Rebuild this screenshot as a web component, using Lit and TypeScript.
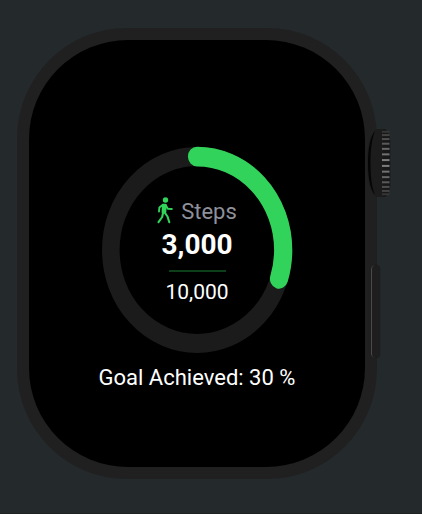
import { LitElement, html, svg, css } from "lit";
import { customElement, property } from "lit/decorators.js";

@customElement("progress-ring")
class ProgressRing extends LitElement {
  @property({ type: Number }) value = 0;

  static styles = css`
    :host {
      display: grid;
      width: 190px;
      height: 206px;
    }
    .ring,
    .content {
      grid-area: 1 / 1;
    }
    .ring {
      width: 100%;
      height: 100%;
      overflow: visible;
    }
    .track,
    .bar {
      fill: none;
      stroke-width: 17.6;
    }
    .track {
      stroke: #1b1b1b;
    }
    .bar {
      stroke: #32d35a;
      stroke-width: 18.2;
      stroke-linecap: round;
    }
    .content {
      display: flex;
      flex-direction: column;
      align-items: center;
      justify-content: center;
      padding-top: 2px;
    }
  `;

  render() {
    return html`
      <svg class="ring" viewBox="0 0 190 190" preserveAspectRatio="none" aria-hidden="true">
        <circle class="track" cx="95" cy="95" r="86.2" />
        <circle
          class="bar"
          cx="95"
          cy="95"
          r="86.2"
          pathLength="100"
          stroke-dasharray="${this.value} 100"
          transform="rotate(-90 95 95)"
        />
      </svg>
      <div class="content"><slot></slot></div>
    `;
  }
}

@customElement("watch-crown")
class WatchCrown extends LitElement {
  static styles = css`
    :host,
    svg {
      display: block;
    }
  `;

  render() {
    const ridges = Array.from({ length: 14 }, (_, i) => {
      const level = Math.round(132 - Math.abs(i - 6.5) * 12);
      const y = 35 + Math.sin(((i - 6.5) / 6.5) * 1.05) * 36;
      return svg`<rect x="15" y=${y - 1} width="7.5" height="2" fill="rgb(${level},${level},${level})" />`;
    });
    return html`
      <svg width="24" height="70" viewBox="0 0 24 70" aria-hidden="true">
        <path d="M9 1C3 6 0 19 0 35s3 29 9 34h9c4-3 5.500-8 5.500-14V15c0-6-1.500-11-5.500-14Z" fill="#1c1c1c" />
        <path d="M8 3C3 9 1 21 1 35s2 26 7 32C5 60 3.500 49 3.500 35S5 10 8 3Z" fill="#050505" />
        <path d="M16 1h2c3 3 5 8 5 14v40c0 6-2 11-5 14h-2Z" fill="#181818" />
        ${ridges}
      </svg>
    `;
  }
}

@customElement("app-root")
class AppRoot extends LitElement {
  @property({ type: Number }) steps = 3000;
  @property({ type: Number }) goal = 10000;

  static styles = css`
    :host {
      display: block;
      box-sizing: border-box;
      min-height: 100vh;
      padding: 28px 45px 32px 17px;
      background: #24292c;
      border-bottom: 1px solid #202122;
      font-family: Roboto, "Liberation Sans", sans-serif;
      color: #fff;
    }
    .case {
      position: relative;
      box-sizing: border-box;
      max-width: 400px;
      margin: 0 auto;
      padding: 12px;
      border-radius: 110px;
      background: #202020;
    }
    .screen {
      display: flex;
      flex-direction: column;
      align-items: center;
      padding: 107px 0 74px;
      border-radius: 99px;
      background: #000;
    }
    .crown {
      position: absolute;
      top: 100px;
      right: -14px;
    }
    .side {
      position: absolute;
      box-sizing: border-box;
      top: 237px;
      right: -3px;
      width: 9px;
      height: 93px;
      padding: 0;
      border: 0;
      border-left: 1px solid #4a4a4a;
      border-radius: 5px;
      background: #1e1e1e;
      box-shadow: 0 0 1px #111;
    }
    .label {
      display: flex;
      align-items: flex-start;
      gap: 8px;
      font-size: 22px;
      line-height: 30px;
      color: #8f909b;
    }
    .walker {
      width: 16px;
      height: 27px;
    }
    .count {
      font-size: 28px;
      line-height: 36px;
      font-weight: 700;
    }
    .rule {
      width: 57px;
      height: 2px;
      margin: 7px 0;
      border: 0;
      background: #0d4019;
    }
    .goal {
      font-size: 21px;
      line-height: 26px;
    }
    .status {
      margin: 10px 0 0;
      font-size: 22px;
      line-height: 30px;
    }
  `;

  render() {
    const percent = Math.round((this.steps / this.goal) * 100);
    const format = (n: number) => n.toLocaleString("en-US");
    return html`
      <main class="case">
        <section class="screen">
          <progress-ring .value=${percent}>
            <div class="label">
              <svg class="walker" viewBox="0 0 16 27" aria-hidden="true" fill="none" stroke="#32d35a" stroke-linecap="round" stroke-linejoin="round">
                <circle cx="8.500" cy="3" r="2.700" fill="#32d35a" stroke="none" />
                <path d="M6.300 8.200h2l-.4 7H6Z" fill="#32d35a" stroke-width="2.800" />
                <path d="M5.800 7.800 2.400 10.400 2 14.500" stroke-width="1.900" />
                <path d="M8.800 8.300 10.800 11.800 14.800 12" stroke-width="1.900" />
                <path d="M6 16 5.200 20 1.500 25.200" stroke-width="2.100" />
                <path d="M7.700 15.500 10.500 19.500 12.300 25.200" stroke-width="2.100" />
              </svg>
              <span>Steps</span>
            </div>
            <strong class="count">${format(this.steps)}</strong>
            <hr class="rule" />
            <span class="goal">${format(this.goal)}</span>
          </progress-ring>
          <p class="status">Goal Achieved: ${percent} %</p>
        </section>
        <watch-crown class="crown"></watch-crown>
        <button class="side" type="button" aria-label="Side button"></button>
      </main>
    `;
  }
}
